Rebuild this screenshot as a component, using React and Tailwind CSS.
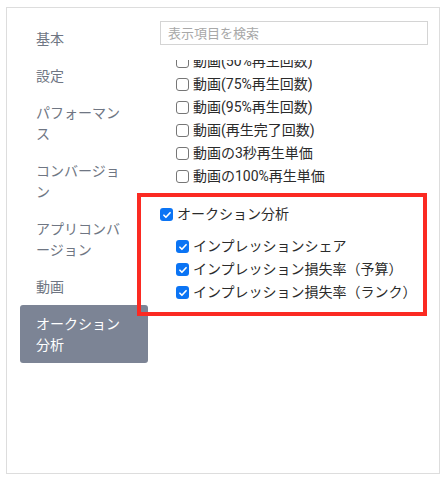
const navItems = [
  "基本",
  "設定",
  "パフォーマンス",
  "コンバージョン",
  "アプリコンバージョン",
  "動画",
  "オークション分析",
];

const groups = [
  {
    label: "動画",
    items: [
      ["動画再生数", false],
      ["動画(25%再生回数)", false],
      ["動画(50%再生回数)", false],
      ["動画(75%再生回数)", false],
      ["動画(95%再生回数)", false],
      ["動画(再生完了回数)", false],
      ["動画の3秒再生単価", false],
      ["動画の100%再生単価", false],
    ],
    checked: false,
  },
  {
    label: "オークション分析",
    items: [
      ["インプレッションシェア", true],
      ["インプレッション損失率（予算）", true],
      ["インプレッション損失率（ランク）", true],
    ],
    checked: true,
  },
];

function Checkbox({ checked }) {
  if (checked) {
    return (
      <span className="flex h-[13px] w-[13px] shrink-0 items-center justify-center rounded-[3px] bg-[#0b74f4]">
        <svg viewBox="0 0 12 12" className="h-[10px] w-[10px]">
          <path d="M2.3 6.3l2.4 2.4 5-5.4" fill="none" stroke="#fff" strokeWidth="2" strokeLinecap="round" strokeLinejoin="round" />
        </svg>
      </span>
    );
  }
  return <span className="h-[13px] w-[13px] shrink-0 rounded-[3px] border border-[#767676] bg-white" />;
}

function Row({ label, checked }) {
  return (
    <label className="flex h-[23px] items-center gap-[4px] text-[14px] text-[#2b2b2b]">
      <Checkbox checked={checked} />
      <span className="whitespace-nowrap">{label}</span>
    </label>
  );
}

export default function App() {
  const active = "オークション分析";

  return (
    <div className="pl-[6px] pt-[7px] font-['Roboto','Noto_Sans_CJK_JP',sans-serif]">
      <div className="relative flex h-[467px] w-[434px] gap-3 border border-[#dddddd] bg-white py-[12px] pl-[13px] pr-[11px]">
        <nav className="flex w-[128px] shrink-0 flex-col">
          {navItems.map((item) => (
            <div
              key={item}
              className={`rounded-[3px] px-4 py-2 text-[14px] leading-[21px] font-['Noto_Sans_CJK_JP',sans-serif] ${
                item === active ? "bg-[#7c8495] text-white" : "text-[#6f7683]"
              }`}
            >
              {item}
            </div>
          ))}
        </nav>

        <div className="flex min-w-0 flex-1 flex-col pt-px">
          <input
            type="text"
            placeholder="表示項目を検索"
            className="h-[24px] w-full border border-[#d4d4d4] px-[7px] text-[13px] text-[#333] outline-none placeholder:text-[#a8a8a8]"
          />
          {/* list is scrolled, so the top rows sit above the visible area */}
          <div className="mt-[15px] flex-1 overflow-hidden">
            <div className="-mt-[88px] flex flex-col gap-[15px]">
              {groups.map((group) => (
                <div key={group.label}>
                  <Row label={group.label} checked={group.checked} />
                  <div className="mt-[9px] pl-4">
                    {group.items.map(([label, checked]) => (
                      <Row key={label} label={label} checked={checked} />
                    ))}
                  </div>
                </div>
              ))}
            </div>
          </div>
        </div>

        <div className="pointer-events-none absolute left-[130px] top-[185px] h-[123px] w-[290px] border-4 border-[#fb2a22]" />
      </div>
    </div>
  );
}
